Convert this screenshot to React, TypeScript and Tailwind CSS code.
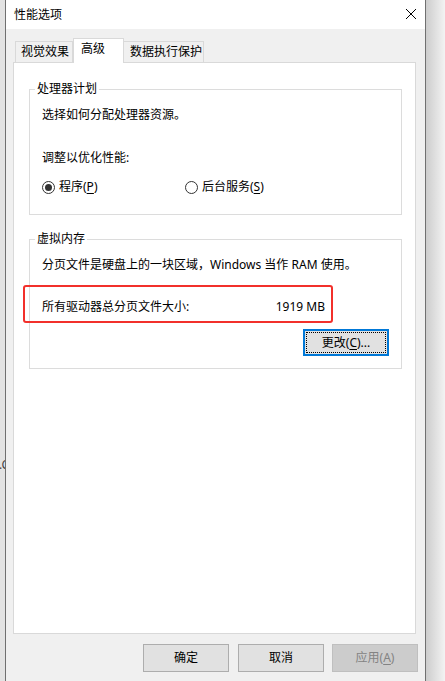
import type { ReactNode } from "react";

const FONT = { fontFamily: '"Noto Sans", "Noto Sans CJK SC", sans-serif' };

function Key({ children }: { children: ReactNode }) {
  return <span className="underline underline-offset-2">{children}</span>;
}

function Radio({ checked, children }: { checked?: boolean; children: ReactNode }) {
  return (
    <label className="flex items-center gap-[4px]">
      <span className="flex h-[13px] w-[13px] items-center justify-center rounded-full border border-[#333]">
        {checked && <span className="h-[7px] w-[7px] rounded-full bg-[#333]" />}
      </span>
      <span>{children}</span>
    </label>
  );
}

function Group({ title, children }: { title: string; children: ReactNode }) {
  return (
    <fieldset className="relative w-[373px] border border-[#dcdcdc]">
      <legend className="ml-[5px] px-[2px] leading-[16px]">{title}</legend>
      <div className="pl-[12px]">{children}</div>
    </fieldset>
  );
}

function Button({
  children,
  disabled,
  className = "",
}: {
  children: ReactNode;
  disabled?: boolean;
  className?: string;
}) {
  return (
    <button
      type="button"
      disabled={disabled}
      className={`flex h-[28px] w-[86px] items-center justify-center border ${
        disabled ? "border-[#bfbfbf] bg-[#cccccc] text-[#838383]" : "border-[#adadad] bg-[#e1e1e1] text-black"
      } ${className}`}
    >
      {children}
    </button>
  );
}

export default function App() {
  return (
    <div className="flex h-[681px] w-[445px] overflow-hidden bg-[#f0f0f0] text-[12px] leading-[16px] text-black" style={FONT}>
      {/* strip of the window behind */}
      <div className="w-[5px] shrink-0 overflow-hidden bg-[#e3e3e3] pt-[457px]">
        <div className="-ml-[1px] whitespace-nowrap text-[#444]">.C</div>
      </div>

      <div className="flex w-[421px] shrink-0 flex-col border-x border-[#707070]">
        {/* title bar */}
        <div className="flex h-[29px] shrink-0 items-center justify-between bg-white pl-[8px] pr-[9px]">
          <span>性能选项</span>
          <svg width="10" height="10" viewBox="0 0 10 10" className="mb-[2px]">
            <path d="M0 0L10 10M10 0L0 10" stroke="#000" strokeWidth="1" />
          </svg>
        </div>

        <div className="flex-1 bg-[#f0f0f0] pl-[7px] pt-[9px]">
          {/* tabs */}
          <div className="relative z-10 -mb-[1px] flex h-[25px] items-end pl-[2px]">
            <div className="mb-[1px] flex h-[21px] w-[58px] items-center border border-b-0 border-[#d9d9d9] pl-[5px]">
              视觉效果
            </div>
            <div className="h-[25px] w-[51px] border border-b-0 border-[#d9d9d9] bg-white pl-[7px] pt-[2px]">高级</div>
            <div className="mb-[1px] flex h-[21px] w-[80px] items-center border border-b-0 border-l-0 border-[#d9d9d9] pl-[6px]">
              数据执行保护
            </div>
          </div>

          {/* tab page */}
          <div className="h-[572px] w-[403px] border border-[#d9d9d9] bg-white pl-[15px] pt-[18px]">
            <Group title="处理器计划">
              <div className="pb-[19px] pt-[10px]">
                <div>选择如何分配处理器资源。</div>
                <div className="mt-[27px]">调整以优化性能:</div>
                <div className="mt-[13px] flex items-center">
                  <div className="w-[143px]">
                    <Radio checked>
                      程序(<Key>P</Key>)
                    </Radio>
                  </div>
                  <Radio>
                    后台服务(<Key>S</Key>)
                  </Radio>
                </div>
              </div>
            </Group>

            <div className="mt-[16px]">
              <Group title="虚拟内存">
                <div className="pb-[12px] pt-[10px]">
                  <div>分页文件是硬盘上的一块区域，Windows 当作 RAM 使用。</div>
                  <div className="relative mt-[26px] flex w-[283px] justify-between">
                    <span>所有驱动器总分页文件大小:</span>
                    <span>1919 MB</span>
                    <div className="pointer-events-none absolute -bottom-[8px] -left-[19px] -right-[8px] -top-[14px] rounded-[3px] border-2 border-[#f2302b]" />
                  </div>
                  <button
                    type="button"
                    className="ml-[261px] mt-[14px] flex h-[27px] w-[86px] items-center justify-center border-2 border-[#0078d7] bg-[#e1e1e1] p-[1px]"
                  >
                    <span className="flex h-full w-full items-center justify-center border border-dotted border-black">
                      更改(<Key>C</Key>)...
                    </span>
                  </button>
                </div>
              </Group>
            </div>
          </div>

          {/* dialog buttons */}
          <div className="mt-[10px] flex pl-[130px]">
            <Button>确定</Button>
            <Button className="ml-[9px]">取消</Button>
            <Button disabled className="ml-[8px]">
              应用(<Key>A</Key>)
            </Button>
          </div>
        </div>
      </div>

      {/* drop shadow of the dialog */}
      <div className="flex-1 bg-linear-to-r from-[#cdcdcd] to-[#f3f3f3]" />
    </div>
  );
}
